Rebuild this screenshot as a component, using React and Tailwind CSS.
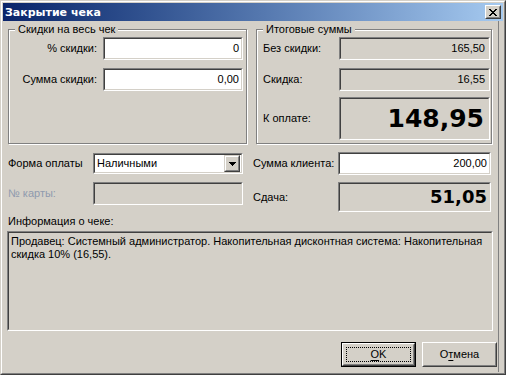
import React from "react";

function Sunken({ className = "", innerClass = "", children }) {
  return (
    <div className={"border border-t-[#808080] border-l-[#808080] border-b-white border-r-white " + className}>
      <div className={"h-full w-full border border-t-[#404040] border-l-[#404040] border-b-[#d4d0c8] border-r-[#d4d0c8] " + innerClass}>
        {children}
      </div>
    </div>
  );
}

function Group({ title, className = "", children }) {
  return (
    <div className={"relative border border-[#808080] shadow-[inset_1px_1px_0_#ffffff,1px_1px_0_#ffffff] " + className}>
      <div className="absolute left-[6px] top-[-7px] px-[3px] bg-[#d4d0c8] leading-[13px]">{title}</div>
      {children}
    </div>
  );
}

function CloseButton() {
  return (
    <div className="w-[16px] h-[14px] bg-[#d4d0c8] border border-t-white border-l-white border-r-[#404040] border-b-[#404040]">
      <div className="h-full w-full border border-t-[#d4d0c8] border-l-[#d4d0c8] border-r-[#808080] border-b-[#808080] flex items-center justify-center">
        <svg width="8" height="7" viewBox="0 0 8 7" shapeRendering="crispEdges">
          <path d="M0 0h2v1h-2z M6 0h2v1h-2z M1 1h2v1h-2z M5 1h2v1h-2z M2 2h4v1h-4z M3 3h2v1h-2z M2 4h4v1h-4z M1 5h2v1h-2z M5 5h2v1h-2z M0 6h2v1h-2z M6 6h2v1h-2z" fill="#000" />
        </svg>
      </div>
    </div>
  );
}

function Button({ children, isDefault = false }) {
  const inner = (
    <div className="h-full w-full bg-[#d4d0c8] border border-t-white border-l-white border-r-[#404040] border-b-[#404040]">
      <div className="h-full w-full border border-t-[#d4d0c8] border-l-[#d4d0c8] border-r-[#808080] border-b-[#808080] flex items-center justify-center">
        {isDefault ? (
          <div className="w-[65px] h-[15px] border border-dotted border-black flex items-center justify-center">{children}</div>
        ) : (
          children
        )}
      </div>
    </div>
  );
  if (isDefault) {
    return <div className="w-[75px] h-[25px] border border-black">{inner}</div>;
  }
  return <div className="w-[75px] h-[25px]">{inner}</div>;
}

export default function App() {
  return (
    <div className="w-[506px] h-[375px] font-['Liberation_Sans',Arial,sans-serif] text-[11px] leading-[13px] text-black select-none">
      <div className="h-full w-full bg-[#d4d0c8] border border-t-[#d4d0c8] border-l-[#d4d0c8] border-r-[#404040] border-b-[#404040]">
        <div className="h-full w-full border border-t-white border-l-white border-r-[#808080] border-b-[#808080] p-px flex flex-col">
          <div className="h-[18px] shrink-0 flex items-center bg-linear-to-r from-[#0a246a] to-[#a6caf0] pl-[2px] pr-[2px]">
            <span className="font-['DejaVu_Sans',sans-serif] font-bold text-white text-[11px]">Закрытие чека</span>
            <div className="ml-auto">
              <CloseButton />
            </div>
          </div>

          <div className="flex-1 flex">
            <div className="w-[496px] border-r border-[#808080] flex flex-col pl-[5px] pt-[8px]">
              <div className="flex">
                <Group title="Скидки на весь чек" className="w-[239px] h-[115px] pt-[7px] pr-[3px]">
                  <div className="flex items-center justify-end gap-[6px] h-[23px]">
                    <span>% скидки:</span>
                    <Sunken className="w-[140px] h-[23px] bg-white" innerClass="flex items-center justify-end pr-[2px]">0</Sunken>
                  </div>
                  <div className="flex items-center justify-end gap-[6px] h-[23px] mt-[8px]">
                    <span>Сумма скидки:</span>
                    <Sunken className="w-[140px] h-[23px] bg-white" innerClass="flex items-center justify-end pr-[2px]">0,00</Sunken>
                  </div>
                </Group>
                <Group title="Итоговые суммы" className="ml-[9px] w-[236px] h-[115px] pt-[7px] pl-[6px]">
                  <div className="flex items-center h-[23px]">
                    <span className="w-[76px]">Без скидки:</span>
                    <Sunken className="w-[151px] h-[23px]" innerClass="flex items-center justify-end pr-[3px]">165,50</Sunken>
                  </div>
                  <div className="flex items-center h-[23px] mt-[8px]">
                    <span className="w-[76px]">Скидка:</span>
                    <Sunken className="w-[151px] h-[23px]" innerClass="flex items-center justify-end pr-[3px]">16,55</Sunken>
                  </div>
                  <div className="flex items-center h-[43px] mt-[6px]">
                    <span className="w-[76px]">К оплате:</span>
                    <Sunken className="w-[151px] h-[43px]" innerClass="flex items-center justify-end pr-[4px]">
                      <span className="font-['DejaVu_Sans',sans-serif] font-bold text-[25px] leading-[30px]">148,95</span>
                    </Sunken>
                  </div>
                </Group>
              </div>

              <div className="flex mt-[8px]">
                <div className="w-[245px] flex flex-col">
                  <div className="flex items-center h-[23px]">
                    <span className="w-[85px]">Форма оплаты</span>
                    <Sunken className="w-[150px] h-[21px] bg-white" innerClass="flex items-center pl-[1px] pr-[1px]">
                      <span className="flex-1 pl-[1px]">Наличными</span>
                      <div className="w-[16px] h-[17px] bg-[#d4d0c8] border border-t-[#d4d0c8] border-l-[#d4d0c8] border-r-[#404040] border-b-[#404040]">
                        <div className="h-full w-full border border-t-white border-l-white border-r-[#808080] border-b-[#808080] flex items-center justify-center">
                          <svg width="7" height="4" viewBox="0 0 7 4" shapeRendering="crispEdges">
                            <path d="M0 0h7v1h-7z M1 1h5v1h-5z M2 2h3v1h-3z M3 3h1v1h-1z" fill="#000" />
                          </svg>
                        </div>
                      </div>
                    </Sunken>
                  </div>
                  <div className="flex items-center h-[23px] mt-[7px]">
                    <span className="w-[85px] text-[#8f9aae]">№ карты:</span>
                    <Sunken className="w-[150px] h-[23px]" />
                  </div>
                </div>
                <div className="flex flex-col">
                  <div className="flex items-center h-[23px]">
                    <span className="w-[85px]">Сумма клиента:</span>
                    <Sunken className="w-[153px] h-[23px] bg-white" innerClass="flex items-center justify-end pr-[2px]">200,00</Sunken>
                  </div>
                  <div className="flex items-center h-[30px] mt-[7px]">
                    <span className="w-[85px]">Сдача:</span>
                    <Sunken className="w-[153px] h-[30px]" innerClass="flex items-center justify-end pr-[2px]">
                      <span className="font-['DejaVu_Sans',sans-serif] font-bold text-[18px] leading-[24px]">51,05</span>
                    </Sunken>
                  </div>
                </div>
              </div>

              <div className="mt-[3px] h-[13px]">Информация о чеке:</div>
              <Sunken className="ml-[-1px] mt-[3px] w-[486px] h-[100px]" innerClass="pl-[2px] pt-[2px]">
                <div>
                  Продавец: Системный администратор. Накопительная дисконтная система: Накопительная
                  <br />
                  скидка 10% (16,55).
                </div>
              </Sunken>

              <div className="flex justify-end gap-[6px] mt-[11px] pr-[1px]">
                <Button isDefault>
                  <span>
                    <span className="underline underline-offset-2">O</span>K
                  </span>
                </Button>
                <Button>
                  <span>
                    О<span className="underline underline-offset-2">т</span>мена
                  </span>
                </Button>
              </div>
            </div>
          </div>
        </div>
      </div>
    </div>
  );
}
